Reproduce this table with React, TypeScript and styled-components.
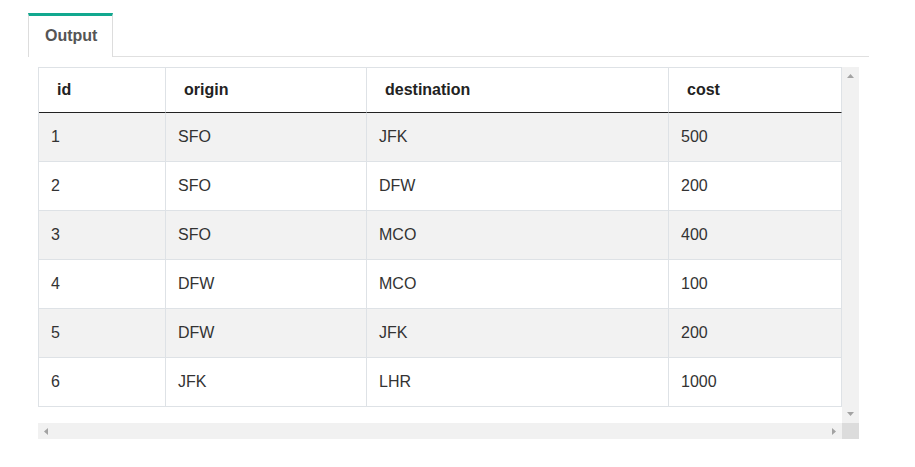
import React from "react";
import styled, { createGlobalStyle } from "styled-components";

const GlobalStyle = createGlobalStyle`
  html, body { margin: 0; padding: 0; background: #ffffff; }
  body { font-family: "Liberation Sans", Arial, sans-serif; }
  * { box-sizing: border-box; }
`;

const Wrapper = styled.div`
  margin-left: 28px;
  width: 841px;
  padding-top: 13px;
`;

const TabList = styled.div`
  display: flex;
  border-bottom: 1px solid #e0e0e0;
  height: 44px;
`;

const Tab = styled.div`
  height: 44px;
  margin-bottom: -1px;
  padding: 0 15px 2px 16px;
  background: #ffffff;
  border-top: 3px solid #12a88f;
  border-left: 1px solid #dddddd;
  border-right: 1px solid #dddddd;
  font-size: 16px;
  font-weight: 700;
  line-height: 39px;
  color: #555555;
`;

const Panel = styled.div`
  padding: 10px 0 0 10px;
`;

const ScrollFrame = styled.div`
  display: grid;
  grid-template-columns: 804px 17px;
  grid-template-rows: 356px 16px;
  width: 821px;
`;

const Viewport = styled.div`
  overflow: hidden;
  background: #ffffff;
`;

const Table = styled.div`
  display: grid;
  grid-template-columns: 127px 201px 302px 173px;
  width: 804px;
  border-left: 1px solid #dee2e6;
  border-top: 1px solid #dee2e6;
`;

const HeadCell = styled.div`
  height: 45px;
  padding-left: 18px;
  border-right: 1px solid #dee2e6;
  border-bottom: 1px solid #222222;
  font-size: 16px;
  font-weight: 700;
  line-height: 44px;
  color: #222222;
`;

const Cell = styled.div<{ $striped: boolean }>`
  height: 49px;
  padding-left: 12px;
  border-right: 1px solid #dee2e6;
  border-bottom: 1px solid #dee2e6;
  background: ${(p) => (p.$striped ? "#f2f2f2" : "#ffffff")};
  font-size: 16px;
  line-height: 48px;
  color: #333333;
`;

const VTrack = styled.div`
  background: #f1f1f1;
  display: flex;
  flex-direction: column;
  align-items: center;
  justify-content: space-between;
  padding: 7px 0 7px 0;
`;

const HTrack = styled.div`
  background: #f1f1f1;
  display: flex;
  align-items: center;
  justify-content: space-between;
  padding: 0 6px 0 6px;
`;

const Corner = styled.div`
  background: #dcdcdc;
`;

const Arrow = styled.svg`
  display: block;
  fill: #a3a3a3;
`;

const columns = ["id", "origin", "destination", "cost"];
const rows = [
  ["1", "SFO", "JFK", "500"],
  ["2", "SFO", "DFW", "200"],
  ["3", "SFO", "MCO", "400"],
  ["4", "DFW", "MCO", "100"],
  ["5", "DFW", "JFK", "200"],
  ["6", "JFK", "LHR", "1000"],
];

export default function App() {
  return (
    <>
      <GlobalStyle />
      <Wrapper>
        <TabList>
          <Tab>Output</Tab>
        </TabList>
        <Panel>
          <ScrollFrame>
            <Viewport>
              <Table>
                {columns.map((c) => (
                  <HeadCell key={c}>{c}</HeadCell>
                ))}
                {rows.map((r, i) =>
                  r.map((v, j) => (
                    <Cell key={`${i}-${j}`} $striped={i % 2 === 0}>
                      {v}
                    </Cell>
                  ))
                )}
              </Table>
            </Viewport>
            <VTrack>
              <Arrow width="7" height="4" viewBox="0 0 7 4">
                <polygon points="3.5,0 7,4 0,4" />
              </Arrow>
              <Arrow width="7" height="4" viewBox="0 0 7 4">
                <polygon points="0,0 7,0 3.5,4" />
              </Arrow>
            </VTrack>
            <HTrack>
              <Arrow width="4" height="7" viewBox="0 0 4 7">
                <polygon points="4,0 4,7 0,3.5" />
              </Arrow>
              <Arrow width="4" height="7" viewBox="0 0 4 7">
                <polygon points="0,0 4,3.5 0,7" />
              </Arrow>
            </HTrack>
            <Corner />
          </ScrollFrame>
        </Panel>
      </Wrapper>
    </>
  );
}
